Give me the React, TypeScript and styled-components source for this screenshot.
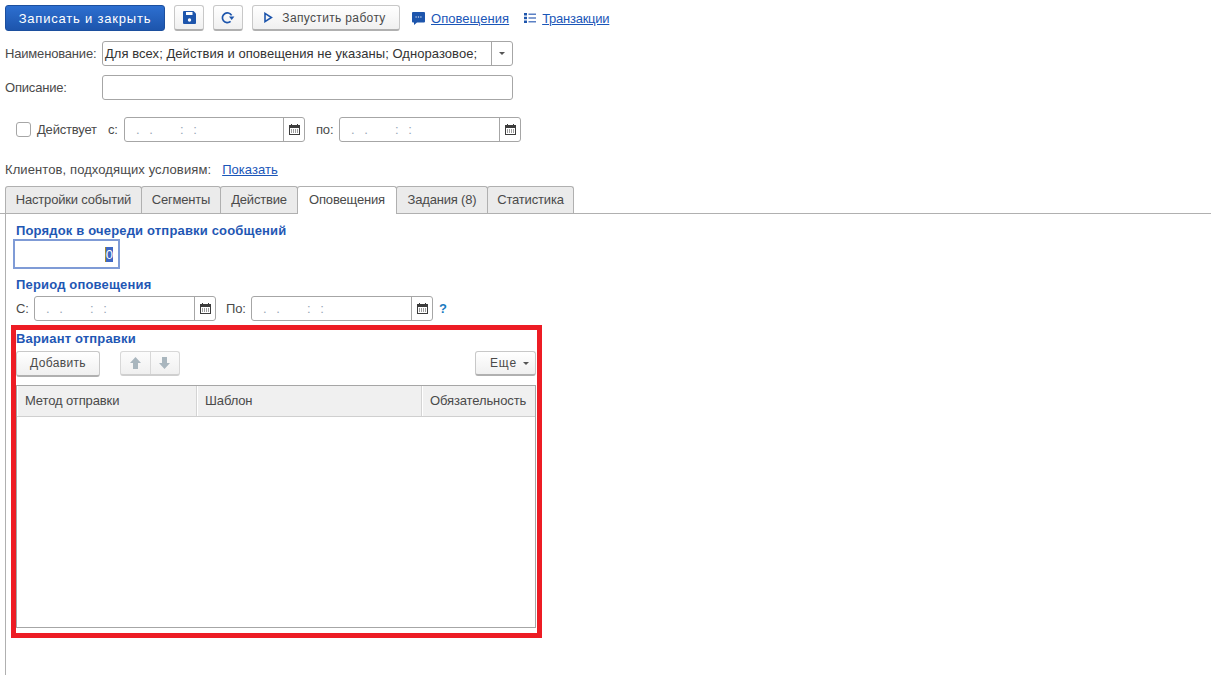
import React from "react";
import styled, { createGlobalStyle } from "styled-components";

const Global = createGlobalStyle`
  html, body { margin: 0; padding: 0; background: #fff; }
  body { font-family: "Liberation Sans", Arial, sans-serif; font-size: 13px; letter-spacing: 0.05px; color: #4a4a4a; overflow: hidden; }
  * { box-sizing: border-box; }
`;

const Page = styled.div`
  width: 1211px;
  height: 675px;
  overflow: hidden;
  display: flex;
  flex-direction: column;
  padding-top: 5px;
`;

const Toolbar = styled.div`
  display: flex;
  align-items: center;
  height: 26px;
  padding-left: 5px;
`;

const Button = styled.button<{ $w: number; $ml?: number }>`
  width: ${(p) => p.$w}px;
  height: 26px;
  margin-left: ${(p) => p.$ml ?? 0}px;
  padding: 0;
  display: flex;
  align-items: center;
  justify-content: center;
  font: inherit;
  font-size: 12px;
  letter-spacing: 0.35px;
  color: #4a4a4a;
  background: linear-gradient(#ffffff, #f0f0f0);
  border: 1px solid #c8c8c8;
  border-bottom: 2px solid #b0b0b0;
  border-radius: 3px;
`;

const PrimaryButton = styled(Button)`
  color: #fff;
  font-size: 13px;
  letter-spacing: 0.8px;
  background: linear-gradient(#2d6fd0, #1d55ac);
  border: 1px solid #1c4f9e;
`;

const RunIcon = styled.svg`
  margin: 0 9px 0 -2px;
`;

const ToolLink = styled.a<{ $ml: number; $ls?: number }>`
  display: inline-flex;
  align-items: center;
  gap: 6px;
  margin-left: ${(p) => p.$ml}px;
  color: #1a56b8;
  letter-spacing: ${(p) => p.$ls ?? 0.05}px;
  text-decoration: underline;
`;

const ToolIcon = styled.svg`
  flex: none;
`;

const FormRow = styled.div<{ $mt: number; $pl?: number }>`
  display: flex;
  align-items: center;
  margin-top: ${(p) => p.$mt}px;
  padding-left: ${(p) => p.$pl ?? 5}px;
  height: 25px;
`;

const Label = styled.span<{ $w?: number; $ml?: number }>`
  width: ${(p) => (p.$w ? `${p.$w}px` : "auto")};
  margin-left: ${(p) => p.$ml ?? 0}px;
  flex: none;
  letter-spacing: -0.18px;
  white-space: nowrap;
`;

const InfoLabel = styled(Label)`
  letter-spacing: 0.1px;
`;

const Field = styled.div<{ $w: number }>`
  width: ${(p) => p.$w}px;
  height: 25px;
  flex: none;
  display: flex;
  align-items: center;
  background: #fff;
  border: 1px solid #a6a6a6;
  border-radius: 3px;
`;

const FieldText = styled.span`
  flex: 1;
  min-width: 0;
  padding-left: 2px;
  color: #333;
  white-space: nowrap;
  overflow: hidden;
`;

const Mask = styled.span`
  flex: 1;
  padding-left: 11px;
  color: #97a6b6;
  letter-spacing: 0.8px;
  white-space: pre;
`;

const FieldButton = styled.span<{ $w: number }>`
  width: ${(p) => p.$w}px;
  height: 100%;
  flex: none;
  display: flex;
  align-items: center;
  justify-content: center;
  border-left: 1px solid #a6a6a6;
`;

const Caret = styled.span`
  width: 0;
  height: 0;
  border-left: 3px solid transparent;
  border-right: 3px solid transparent;
  border-top: 3px solid #555;
`;

const Check = styled.span`
  width: 15px;
  height: 15px;
  flex: none;
  border: 1px solid #a6a6a6;
  border-radius: 3px;
  margin-right: 6px;
`;

const InfoRow = styled.div`
  display: flex;
  align-items: center;
  height: 16px;
  margin-top: 19px;
  padding-left: 5px;
`;

const InfoLink = styled.a`
  margin-left: 11px;
  color: #1a56b8;
  text-decoration: underline;
`;

const TabBar = styled.div`
  display: flex;
  height: 28px;
  margin-top: 9px;
  padding-left: 5px;
  border-bottom: 1px solid #b0b0b0;
`;

const Tab = styled.div<{ $w: number; $active?: boolean }>`
  width: ${(p) => p.$w}px;
  height: ${(p) => (p.$active ? 28 : 27)}px;
  padding-bottom: ${(p) => (p.$active ? 2 : 1)}px;
  display: flex;
  align-items: center;
  justify-content: center;
  letter-spacing: -0.18px;
  background: ${(p) => (p.$active ? "#fff" : "#ebebeb")};
  border: 1px solid #b0b0b0;
  border-bottom: 0;
  border-radius: 3px 3px 0 0;
  margin-right: -1px;
  position: relative;
  z-index: ${(p) => (p.$active ? 1 : 0)};
`;

const Panel = styled.div`
  flex: 1;
  margin-left: 5px;
  border-left: 1px solid #b0b0b0;
  padding-left: 5px;
  display: flex;
  flex-direction: column;
  align-items: flex-start;
`;

const Heading = styled.div<{ $mt: number; $ml?: number }>`
  height: 16px;
  line-height: 16px;
  margin-top: ${(p) => p.$mt}px;
  margin-left: ${(p) => p.$ml ?? 5}px;
  color: #1f57b4;
  font-weight: bold;
  font-size: 13px;
  letter-spacing: 0.17px;
  white-space: nowrap;
`;

const NumberInput = styled.div`
  width: 107px;
  height: 30px;
  margin-left: 2px;
  padding-right: 5px;
  display: flex;
  align-items: center;
  justify-content: flex-end;
  border: 2px solid #7f9bd6;
`;

const Selected = styled.span`
  background: #3f68c4;
  color: #fff;
  border-left: 1px solid #a58a2c;
  line-height: 15px;
`;

const PeriodRow = styled.div`
  display: flex;
  align-items: center;
  height: 25px;
  margin-top: 3px;
  margin-left: 5px;
`;

const Help = styled.span`
  margin-left: 6px;
  color: #1a7ac0;
  font-weight: bold;
`;

const Highlight = styled.section`
  width: 531px;
  height: 313px;
  margin-top: 4px;
  border: 5px solid #ed1c24;
  display: flex;
  flex-direction: column;
`;

const ActionBar = styled.div`
  display: flex;
  align-items: center;
  width: 520px;
  height: 25px;
  margin-top: 4px;
`;

const IconGroup = styled.div`
  width: 60px;
  height: 25px;
  margin-left: 20px;
  display: flex;
  background: linear-gradient(#fcfcfc, #f0f0f0);
  border: 1px solid #d8d8d8;
  border-bottom: 2px solid #cfcfcf;
  border-radius: 3px;
`;

const GroupCell = styled.div`
  flex: 1;
  display: flex;
  align-items: center;
  justify-content: center;
  & + & { border-left: 1px solid #d8d8d8; }
`;

const MoreButton = styled(Button)`
  margin-left: auto;
  height: 25px;
  gap: 6px;
  padding-left: 8px;
  letter-spacing: 0.9px;
`;

const Table = styled.div`
  width: 520px;
  height: 243px;
  margin-top: 9px;
  border: 1px solid #a6a6a6;
`;

const HeaderRow = styled.div`
  display: flex;
  height: 31px;
  background: #f0f0f0;
  border-bottom: 1px solid #cfcfcf;
`;

const HeaderCell = styled.div<{ $w: number; $last?: boolean }>`
  flex: ${(p) => (p.$last ? 1 : "none")};
  width: ${(p) => p.$w}px;
  display: flex;
  align-items: center;
  padding: 0 0 2px 8px;
  letter-spacing: -0.12px;
  white-space: nowrap;
  border-right: ${(p) => (p.$last ? "0" : "1px solid #d4d4d4")};
  box-shadow: inset 1px 0 0 #fff;
`;

const CalendarIcon = () => (
  <svg width="11" height="11" viewBox="0 0 11 11" fill="none">
    <rect x="0.5" y="1.5" width="10" height="9" fill="#fff" stroke="#3c3c3c" />
    <rect x="0" y="1" width="11" height="3" fill="#3c3c3c" />
    <rect x="2" y="0" width="1" height="2" fill="#3c3c3c" />
    <rect x="8" y="0" width="1" height="2" fill="#3c3c3c" />
    <path d="M2 6h1M4 6h1M6 6h1M8 6h1M2 8h1M4 8h1M6 8h1M8 8h1" stroke="#3c3c3c" />
  </svg>
);

const DateField = ({ w }: { w: number }) => (
  <Field $w={w}>
    <Mask>{".  .      :  :"}</Mask>
    <FieldButton $w={21}>
      <CalendarIcon />
    </FieldButton>
  </Field>
);

export default function App() {
  return (
    <Page>
      <Global />
      <Toolbar>
        <PrimaryButton $w={160}>Записать и закрыть</PrimaryButton>
        <Button $w={30} $ml={9}>
          <svg width="13" height="13" viewBox="0 0 13 13">
            <path d="M1 0h9.5L13 2.5V12a1 1 0 0 1-1 1H1a1 1 0 0 1-1-1V1a1 1 0 0 1 1-1z" fill="#1d55ac" />
            <rect x="3" y="1" width="6.5" height="3" fill="#fff" />
            <circle cx="6.5" cy="9" r="1.7" fill="#fff" />
          </svg>
        </Button>
        <Button $w={30} $ml={9}>
          <svg width="14" height="13" viewBox="0 0 14 13" fill="none">
            <path d="M9.6 10.4A4.9 4.9 0 1 1 10.6 4.4" stroke="#1d55ac" strokeWidth="1.7" />
            <path d="M8 5.6h5.4L10.7 9z" fill="#1d55ac" />
          </svg>
        </Button>
        <Button $w={148} $ml={9}>
          <RunIcon width="9" height="11" viewBox="0 0 9 11" fill="none">
            <path d="M1 1.4 7.4 5.5 1 9.6z" stroke="#1d55ac" strokeWidth="1.6" />
          </RunIcon>
          Запустить работу
        </Button>
        <ToolLink $ml={12}>
          <ToolIcon width="13" height="13" viewBox="0 0 13 13">
            <path d="M1 0h11a1 1 0 0 1 1 1v8.5a1 1 0 0 1-1 1H5L2 13v-2.5H1a1 1 0 0 1-1-1V1a1 1 0 0 1 1-1z" fill="#1d55ac" />
            <path d="M3.5 5h1.2M5.9 5h1.2M8.3 5h1.2" stroke="#fff" />
          </ToolIcon>
          Оповещения
        </ToolLink>
        <ToolLink $ml={15} $ls={-0.25}>
          <ToolIcon width="12" height="12" viewBox="0 0 12 12">
            <path d="M0 1h3v2.4H0zM0 4.8h3v2.4H0zM0 8.6h3V11H0z" fill="#1d55ac" />
            <path d="M4.5 1.4H12v1.6H4.5zM4.5 5.2H12v1.6H4.5zM4.5 9H12v1.6H4.5z" fill="#5b80c4" />
          </ToolIcon>
          Транзакции
        </ToolLink>
      </Toolbar>

      <FormRow $mt={10}>
        <Label $w={97}>Наименование:</Label>
        <Field $w={411}>
          <FieldText>Для всех; Действия и оповещения не указаны; Одноразовое;</FieldText>
          <FieldButton $w={21}>
            <Caret />
          </FieldButton>
        </Field>
      </FormRow>
      <FormRow $mt={9}>
        <Label $w={97}>Описание:</Label>
        <Field $w={411} />
      </FormRow>
      <FormRow $mt={17} $pl={16}>
        <Check />
        <Label $w={62}>Действует</Label>
        <Label $ml={9} $w={16}>с:</Label>
        <DateField w={181} />
        <Label $ml={11} $w={23}>по:</Label>
        <DateField w={182} />
      </FormRow>

      <InfoRow>
        <InfoLabel>Клиентов, подходящих условиям:</InfoLabel>
        <InfoLink>Показать</InfoLink>
      </InfoRow>

      <TabBar>
        <Tab $w={137}>Настройки событий</Tab>
        <Tab $w={80}>Сегменты</Tab>
        <Tab $w={78}>Действие</Tab>
        <Tab $w={100} $active>Оповещения</Tab>
        <Tab $w={92}>Задания (8)</Tab>
        <Tab $w={87}>Статистика</Tab>
      </TabBar>

      <Panel>
        <Heading $mt={9}>Порядок в очереди отправки сообщений</Heading>
        <NumberInput>
          <Selected>0</Selected>
        </NumberInput>
        <Heading $mt={8}>Период оповещения</Heading>
        <PeriodRow>
          <Label $w={18}>С:</Label>
          <DateField w={182} />
          <Label $ml={10} $w={25}>По:</Label>
          <DateField w={182} />
          <Help>?</Help>
        </PeriodRow>

        <Highlight>
          <Heading $mt={1} $ml={0}>Вариант отправки</Heading>
          <ActionBar>
            <Button $w={84}>Добавить</Button>
            <IconGroup>
              <GroupCell>
                <svg width="11" height="12" viewBox="0 0 11 12">
                  <path d="M5.5 0 11 6H8v6H3V6H0z" fill="#a9b6be" />
                </svg>
              </GroupCell>
              <GroupCell>
                <svg width="11" height="12" viewBox="0 0 11 12">
                  <path d="M5.5 12 11 6H8V0H3v6H0z" fill="#a9b6be" />
                </svg>
              </GroupCell>
            </IconGroup>
            <MoreButton $w={61}>
              Еще
              <Caret />
            </MoreButton>
          </ActionBar>
          <Table>
            <HeaderRow>
              <HeaderCell $w={180}>Метод отправки</HeaderCell>
              <HeaderCell $w={225}>Шаблон</HeaderCell>
              <HeaderCell $w={113} $last>Обязательность</HeaderCell>
            </HeaderRow>
          </Table>
        </Highlight>
      </Panel>
    </Page>
  );
}
